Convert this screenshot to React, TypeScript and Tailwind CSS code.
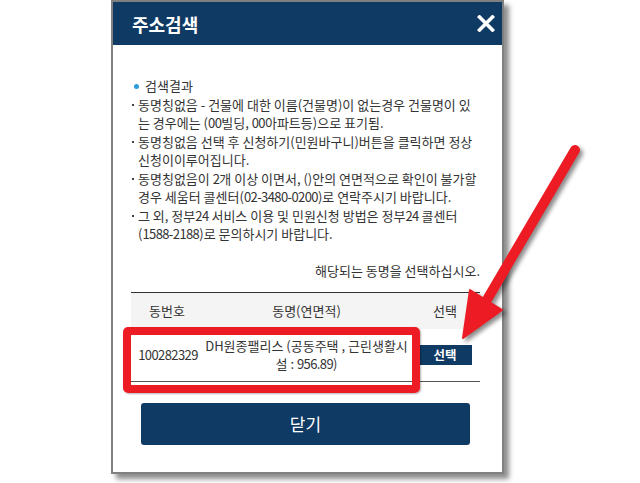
import { useState } from "react";

const notes = [
  ["동명칭없음 - 건물에 대한 이름(건물명)이 없는경우 건물명이 있", "는 경우에는 (00빌딩, 00아파트등)으로 표기됨."],
  ["동명칭없음 선택 후 신청하기(민원바구니)버튼을 클릭하면 정상", "신청이이루어집니다."],
  ["동명칭없음이 2개 이상 이면서, ()안의 연면적으로 확인이 불가할", "경우 세움터 콜센터(02-3480-0200)로 연락주시기 바랍니다."],
  ["그 외, 정부24 서비스 이용 및 민원신청 방법은 정부24 콜센터", "(1588-2188)로 문의하시기 바랍니다."],
];

// digits in the original font are narrower than Noto's
function Num({ text }: { text: string }) {
  const parts = text.split(/([0-9][0-9.\-]*)/);
  return (
    <>
      {parts.map((p, i) =>
        i % 2 === 1 ? (
          <span key={i} className="tracking-[-0.6px]">
            {p}
          </span>
        ) : (
          p
        )
      )}
    </>
  );
}

export default function App() {
  const [open, setOpen] = useState(true);

  return (
    <div className="relative w-[640px] h-[483px] bg-white overflow-hidden font-['Noto_Sans_CJK_KR',sans-serif] text-[#333]">
      <div className="ml-[111px] w-[393px] h-[474px] flex flex-col border-2 border-[#808080] bg-white shadow-[5px_5px_5px_rgba(0,0,0,0.45)]">
        <header className="h-[43px] shrink-0 flex items-center justify-between bg-[#0e3a64] pl-[19px] pr-[7px]">
          <h1 className="text-white text-[18px] font-bold leading-none">주소검색</h1>
          <button onClick={() => setOpen(!open)} aria-label="close" className="w-[18px] h-[18px] flex items-center justify-center">
            <svg width="18" height="17" viewBox="0 0 18 17">
              <path d="M2.5 2 L15.5 15 M15.5 2 L2.5 15" stroke="#fff" strokeWidth="3.6" strokeLinecap="square" />
            </svg>
          </button>
        </header>

        <div className="flex-1 flex flex-col pt-[32px] pl-[18px] pr-[22px] pb-[25px] text-[13px] leading-[18.5px]">
          <div className="flex items-center">
            <span className="ml-[3px] w-[5px] h-[5px] rounded-full bg-[#2b9ddb]" />
            <span className="ml-[6px]">검색결과</span>
          </div>
          <ul>
            {notes.map((n, i) => (
              <li key={i} className="flex">
                <span className="w-[7px] h-[18.5px] shrink-0 flex items-center pl-[1px]">
                  <span className="w-[2px] h-[2px] bg-[#444]" />
                </span>
                <span className="whitespace-nowrap">
                  <Num text={n[0]} />
                  <br />
                  <Num text={n[1]} />
                </span>
              </li>
            ))}
          </ul>
          <p className="mt-[18px] text-right">해당되는 동명을 선택하십시오.</p>

          <div className="mt-[12px] border-t border-[#333]">
            <div className="h-[36px] flex items-center bg-[#f4f4f4] text-center">
              <div className="w-[72px]">동번호</div>
              <div className="flex-1">동명(연면적)</div>
              <div className="w-[70px]">선택</div>
            </div>
            <div className="h-[53px] flex items-center text-center border-b border-[#555] leading-[18px]">
              <div className="w-[72px] pl-[2px]">
                <Num text="100282329" />
              </div>
              <div className="flex-1 whitespace-nowrap">
                DH원종팰리스 (공동주택 , 근린생활시
                <br />
                <Num text="설 : 956.89)" />
              </div>
              <div className="w-[70px] flex justify-center">
                <button className="w-[53px] h-[20px] bg-[#0e3a64] text-white font-bold text-[12.5px] leading-none">선택</button>
              </div>
            </div>
          </div>

          <button className="mt-[21px] mx-[10px] h-[42px] rounded-[3px] bg-[#0e3a64] text-white text-[17px]">닫기</button>
        </div>
      </div>

      <div className="absolute left-[123px] top-[327px] w-[297px] h-[66px] rounded-[5px] border-[8px] border-[#ed1c24] shadow-[1px_1px_2px_rgba(0,0,0,0.3)]" />

      <svg className="absolute left-0 top-0 drop-shadow-[3px_3px_2px_rgba(0,0,0,0.45)]" width="640" height="483" viewBox="0 0 640 483">
        <line x1="575" y1="150" x2="488" y2="298" stroke="#ed1c24" strokeWidth="10" strokeLinecap="round" />
        <polygon points="463,338 470,290 502,310" fill="#ed1c24" stroke="#ed1c24" strokeWidth="2" strokeLinejoin="round" />
      </svg>
    </div>
  );
}
